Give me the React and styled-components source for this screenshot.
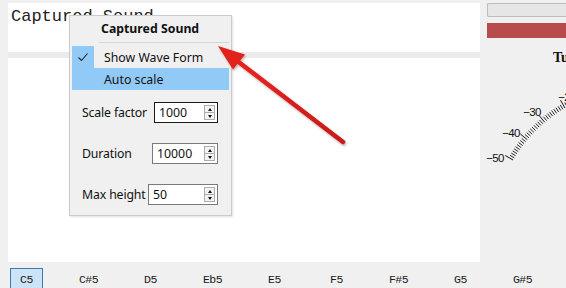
import React from 'react';
import styled, { createGlobalStyle } from 'styled-components';

const Global = createGlobalStyle`
  html, body { margin: 0; padding: 0; background: #f0f0f0; }
  body { width: 566px; height: 288px; overflow: hidden; }
`;

const Page = styled.div`
  position: relative;
  width: 566px;
  height: 288px;
  overflow: hidden;
  background: #f0f0f0;
  display: grid;
  grid-template-rows: 262px 26px;
`;

const Main = styled.div`
  display: grid;
  grid-template-columns: 472px 1fr;
  padding: 3px 0 0 8px;
  min-height: 0;
`;

const LeftColumn = styled.div`
  display: flex;
  flex-direction: column;
  min-height: 0;
`;

const TitlePanel = styled.div`
  height: 49px;
  background: #fff;
  padding: 3px 0 0 3px;
  box-sizing: border-box;
  font-family: "Courier New", "Liberation Mono", monospace;
  font-size: 17px;
  line-height: 22px;
  color: #222;
  white-space: nowrap;
`;

const Band = styled.div`
  height: 6px;
  background: #ebebeb;
`;

const Canvas = styled.div`
  flex: 1;
  background: #fff;
`;

const RightPanel = styled.div`
  display: flex;
  flex-direction: column;
  padding-left: 7px;
  overflow: hidden;
  min-width: 0;
`;

const LevelBar = styled.div`
  height: 14px;
  box-sizing: border-box;
  background: #e6e6e6;
  border: 1px solid #bcbcbc;
  border-right: none;
  border-radius: 2px 0 0 2px;
`;

const RedBar = styled.div`
  height: 15px;
  margin-top: 6px;
  background: #b84c4c;
`;

const TunerTitle = styled.div`
  margin-top: 12px;
  padding-left: 66px;
  font-family: "Liberation Serif", "DejaVu Serif", serif;
  font-weight: bold;
  font-size: 14px;
  line-height: 16px;
  white-space: nowrap;
  color: #111;
`;

const GaugeSvg = styled.svg`
  display: block;
  margin-left: -7px;
  margin-top: 4px;
  overflow: visible;
`;

const NoteRow = styled.div`
  display: flex;
  align-items: flex-start;
  gap: 29px;
  padding: 6px 0 0 10px;
`;

const NoteButton = styled.div`
  flex: none;
  width: 33px;
  height: 23px;
  box-sizing: border-box;
  display: flex;
  align-items: center;
  justify-content: center;
  font-family: "Liberation Mono", "DejaVu Sans Mono", monospace;
  font-size: 11.5px;
  letter-spacing: -0.5px;
  color: #1a1a1a;
  background: ${p => (p.$active ? '#cce4f7' : 'transparent')};
  border: 1px solid ${p => (p.$active ? '#3d7ab0' : 'transparent')};
`;

const Menu = styled.div`
  position: absolute;
  left: 69px;
  top: 15px;
  width: 163px;
  height: 201px;
  box-sizing: border-box;
  background: #f0f0f0;
  border: 1px solid #cbcbcb;
  box-shadow: 1px 1px 2px rgba(0, 0, 0, 0.12);
  padding: 0 2px;
  font-family: "Noto Sans", "Open Sans", sans-serif;
  font-size: 12.3px;
  color: #111;
  z-index: 2;
`;

const MenuHeader = styled.div`
  height: 26px;
  line-height: 25px;
  padding-left: 29px;
  font-weight: bold;
  white-space: nowrap;
`;

const MenuSeparator = styled.div`
  height: 1px;
  margin: 0 0 3px 27px;
  background: #d5d5d5;
`;

const MenuItem = styled.div`
  display: flex;
  height: 22px;
  align-items: center;
  background: ${p => (p.$highlight ? '#91c9f7' : 'transparent')};
`;

const CheckCol = styled.div`
  width: 22px;
  height: 22px;
  flex: none;
  display: flex;
  align-items: center;
  justify-content: center;
  background: ${p => (p.$checked ? '#91c9f7' : 'transparent')};
`;

const ItemLabel = styled.span`
  padding-left: 10px;
  white-space: nowrap;
`;

const Form = styled.div`
  display: flex;
  flex-direction: column;
  gap: 20px;
  padding: 12px 11px 0 10px;
`;

const FormRow = styled.div`
  display: flex;
  align-items: center;
  height: 21px;
`;

const FieldLabel = styled.span`
  white-space: nowrap;
  letter-spacing: -0.15px;
`;

const SpinBox = styled.div`
  margin-left: auto;
  width: ${p => p.$w}px;
  height: 21px;
  box-sizing: border-box;
  display: flex;
  align-items: center;
  background: #fff;
  border: 1px solid ${p => (p.$focused ? '#1a1a1a' : '#7a7a7a')};
  padding-left: 4px;
  padding-right: 2px;
`;

const SpinValue = styled.span`
  flex: 1;
`;

const SpinButtons = styled.div`
  width: 11px;
  height: 15px;
  display: flex;
  flex-direction: column;
`;

const SpinHalf = styled.div`
  flex: 1;
  box-sizing: border-box;
  border: 1px solid #adadad;
  border-top-width: ${p => (p.$down ? '0' : '1px')};
  background: #f3f3f3;
  display: flex;
  align-items: center;
  justify-content: center;
  &::after {
    content: '';
    width: 0;
    height: 0;
    border-left: 2.5px solid transparent;
    border-right: 2.5px solid transparent;
    ${p =>
      p.$down
        ? 'border-top: 3px solid #111;'
        : 'border-bottom: 3px solid #111;'}
  }
`;

const ArrowSvg = styled.svg`
  position: absolute;
  left: 0;
  top: 0;
  pointer-events: none;
  z-index: 3;
`;

const notes = ['C5', 'C#5', 'D5', 'Eb5', 'E5', 'F5', 'F#5', 'G5', 'G#5'];

function Gauge() {
  const cx = 636;
  const cy = 231;
  const R = 142;
  const ticks = [];
  for (let a = 210; a <= 256; a += 1) {
    const rad = (a * Math.PI) / 180;
    const major = (a - 210) % 10 === 0;
    const r1 = R;
    const r2 = major ? R + 9 : R + 5;
    ticks.push(
      <line
        key={a}
        x1={cx + r1 * Math.cos(rad)}
        y1={cy + r1 * Math.sin(rad)}
        x2={cx + r2 * Math.cos(rad)}
        y2={cy + r2 * Math.sin(rad)}
        stroke="#111"
        strokeWidth={major ? 1 : 0.9}
      />
    );
  }
  const labels = [
    { t: '−50', x: 495, y: 162 },
    { t: '−40', x: 511, y: 137 },
    { t: '−30', x: 532, y: 116 },
    { t: '−20', x: 567, y: 101 },
  ];
  return (
    <GaugeSvg width="86" height="120" viewBox="480 70 86 120">
      {ticks}
      {labels.map(l => (
        <text
          key={l.t}
          x={l.x}
          y={l.y}
          textAnchor="middle"
          fontFamily="Liberation Sans, Arial, sans-serif"
          fontSize="11.5"
          letterSpacing="-0.6"
          fill="#111"
        >
          {l.t}
        </text>
      ))}
    </GaugeSvg>
  );
}

function Spin({ value, w, focused }) {
  return (
    <SpinBox $w={w} $focused={focused}>
      <SpinValue>{value}</SpinValue>
      <SpinButtons>
        <SpinHalf />
        <SpinHalf $down />
      </SpinButtons>
    </SpinBox>
  );
}

export default function App() {
  return (
    <>
      <Global />
      <Page>
        <Main>
          <LeftColumn>
            <TitlePanel>Captured Sound</TitlePanel>
            <Band />
            <Canvas />
          </LeftColumn>
          <RightPanel>
            <LevelBar />
            <RedBar />
            <TunerTitle>Tuner</TunerTitle>
            <Gauge />
          </RightPanel>
        </Main>
        <NoteRow>
          {notes.map((n, i) => (
            <NoteButton key={n} $active={i === 0}>
              {n}
            </NoteButton>
          ))}
        </NoteRow>

        <Menu>
          <MenuHeader>Captured Sound</MenuHeader>
          <MenuSeparator />
          <MenuItem>
            <CheckCol $checked>
              <svg width="22" height="22" viewBox="0 0 22 22">
                <path d="M6.5 11.5 L9.5 14.5 L15.5 7.5" fill="none" stroke="#222" strokeWidth="1.1" />
              </svg>
            </CheckCol>
            <ItemLabel>Show Wave Form</ItemLabel>
          </MenuItem>
          <MenuItem $highlight>
            <CheckCol />
            <ItemLabel>Auto scale</ItemLabel>
          </MenuItem>
          <Form>
            <FormRow>
              <FieldLabel>Scale factor</FieldLabel>
              <Spin value="1000" w={64} focused />
            </FormRow>
            <FormRow>
              <FieldLabel>Duration</FieldLabel>
              <Spin value="10000" w={66} />
            </FormRow>
            <FormRow>
              <FieldLabel>Max height</FieldLabel>
              <Spin value="50" w={70} />
            </FormRow>
          </Form>
        </Menu>

        <ArrowSvg width="566" height="288" viewBox="0 0 566 288">
          <defs>
            <filter id="sh" x="-20%" y="-20%" width="140%" height="140%">
              <feDropShadow dx="1" dy="1.5" stdDeviation="1.2" floodColor="#000" floodOpacity="0.3" />
            </filter>
            <linearGradient id="rg" x1="0" y1="0" x2="1" y2="1">
              <stop offset="0" stopColor="#e8241f" />
              <stop offset="1" stopColor="#c81a18" />
            </linearGradient>
          </defs>
          <g filter="url(#sh)">
            <line x1="343" y1="142" x2="236" y2="60" stroke="url(#rg)" strokeWidth="4.5" strokeLinecap="round" />
            <polygon points="218,46 233,69.5 245,54.5" fill="#e3201c" />
          </g>
        </ArrowSvg>
      </Page>
    </>
  );
}
